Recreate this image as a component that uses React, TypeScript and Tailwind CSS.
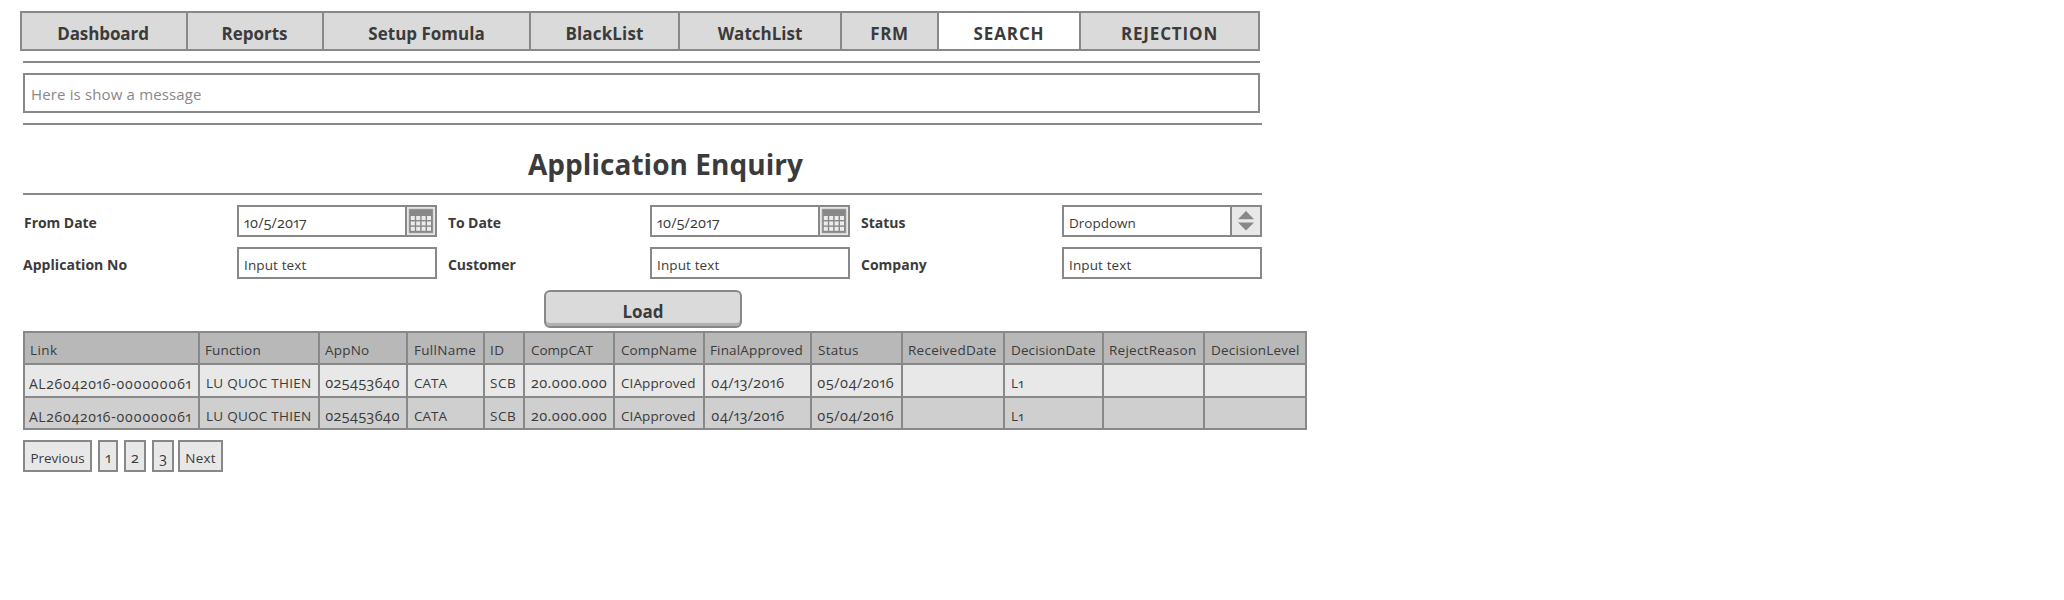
type Item = { label: string; className: string };

const tabs: Item[] = [
  { label: "Dashboard", className: "w-[166px] pr-[2px] tracking-[-0.1px]" },
  { label: "Reports", className: "w-[136px] pr-[1px]" },
  { label: "Setup Fomula", className: "w-[207px]" },
  { label: "BlackList", className: "w-[149px] tracking-[0.15px]" },
  { label: "WatchList", className: "w-[162px]" },
  { label: "FRM", className: "w-[97px] tracking-[0.6px]" },
  { label: "SEARCH", className: "w-[142px] bg-white tracking-[0.9px]" },
  { label: "REJECTION", className: "w-[179px] tracking-[0.85px]" },
];

type Column = {
  label: string;
  value: string;
  width: string;
  head: string;
  cell: string;
};

const columns: Column[] = [
  { label: "Link", value: "AL26042016-000000061", width: "w-[175px]", head: "pl-[5px] tracking-[0.4px]", cell: "pl-[4px] text-[14px] tracking-[0.5px]" },
  { label: "Function", value: "LU QUOC THIEN", width: "w-[120px]", head: "pl-[5px] tracking-[0.15px]", cell: "pl-[6px] tracking-[0.25px]" },
  { label: "AppNo", value: "025453640", width: "w-[88px]", head: "pl-[5px] tracking-[0.2px]", cell: "pl-[5px] text-[14.5px] tracking-[0.15px]" },
  { label: "FullName", value: "CATA", width: "w-[77px]", head: "pl-[6px] tracking-[0.3px]", cell: "pl-[6px]" },
  { label: "ID", value: "SCB", width: "w-[40px]", head: "pl-[5px] tracking-[0.5px]", cell: "pl-[5px] tracking-[0.5px]" },
  { label: "CompCAT", value: "20.000.000", width: "w-[90px]", head: "pl-[6px]", cell: "pl-[6px] text-[14.5px] tracking-[0.15px]" },
  { label: "CompName", value: "CIApproved", width: "w-[90px]", head: "pl-[6px] tracking-[0.1px]", cell: "pl-[6px] tracking-[0.1px]" },
  { label: "FinalApproved", value: "04/13/2016", width: "w-[107px]", head: "pl-[5px] tracking-[0.15px]", cell: "pl-[6px] text-[14.5px] tracking-[0.25px]" },
  { label: "Status", value: "05/04/2016", width: "w-[91px]", head: "pl-[6px] tracking-[0.25px]", cell: "pl-[5px] text-[14.5px] tracking-[0.3px]" },
  { label: "ReceivedDate", value: "", width: "w-[102px]", head: "pl-[5px] tracking-[0.25px]", cell: "" },
  { label: "DecisionDate", value: "L1", width: "w-[99px]", head: "pl-[6px] tracking-[0.12px]", cell: "pl-[6px] tracking-[0.3px]" },
  { label: "RejectReason", value: "", width: "w-[101px]", head: "pl-[5px] tracking-[0.25px]", cell: "" },
  { label: "DecisionLevel", value: "", width: "w-[102px]", head: "pl-[6px] tracking-[0.22px]", cell: "" },
];

const pages: Item[] = [
  { label: "Previous", className: "w-[69px]" },
  { label: "1", className: "ml-[6px] w-[20px] text-[14.5px]" },
  { label: "2", className: "ml-[6px] w-[22px] text-[14.5px]" },
  { label: "3", className: "ml-[6px] w-[22px] text-[14.5px]" },
  { label: "Next", className: "ml-[4px] w-[45px] tracking-[0.2px]" },
];

function CalendarIcon() {
  return (
    <svg width="28" height="28" viewBox="0 0 28 28">
      <rect x="1.75" y="1.75" width="24.5" height="24.5" fill="#a0a0a0" />
      <rect x="2.5" y="2.5" width="23" height="23" fill="#888888" />
      {[9, 14.4, 19.8].map((y) =>
        [3.8, 9.2, 14.6, 20].map((x) => (
          <rect key={`${x}-${y}`} x={x} y={y} width="4" height="4" fill="#ececec" />
        )),
      )}
    </svg>
  );
}

function SpinnerIcon() {
  return (
    <svg width="28" height="28" viewBox="0 0 28 28">
      <path d="M14 4 22 12.3H6Z" fill="#888888" />
      <path d="M6 15.4H22L14 23.6Z" fill="#888888" />
    </svg>
  );
}

function Rule({ className }: { className: string }) {
  return <div className={`ml-[3px] h-[2px] bg-[#888888] ${className}`} />;
}

function Field({ value, kind, text }: { value: string; kind?: "date" | "select"; text: string }) {
  return (
    <div className="flex h-8 w-[200px] border-2 border-[#888888] bg-white">
      <span className={`flex flex-1 items-center pt-1 ${text}`}>{value}</span>
      {kind && (
        <span className="w-[30px] border-l-2 border-[#888888] bg-[#e8e8e8]">
          {kind === "date" ? <CalendarIcon /> : <SpinnerIcon />}
        </span>
      )}
    </div>
  );
}

function Label({ text, className }: { text: string; className: string }) {
  return (
    <span className={`flex h-8 items-center pt-[3px] text-[14px] font-bold ${className}`}>{text}</span>
  );
}

function TableRow({ values, header, className }: { values: string[]; header?: boolean; className: string }) {
  return (
    <div className={`flex w-max border-b-2 border-l-2 border-[#888888] ${className}`}>
      {columns.map((column, i) => (
        <span
          key={column.label}
          className={`flex items-center border-r-2 border-[#888888] ${column.width} ${header ? column.head : column.cell}`}
        >
          {values[i]}
        </span>
      ))}
    </div>
  );
}

export default function App() {
  const record = columns.map((column) => column.value);

  return (
    <div className="min-h-[600px] bg-white pt-[11px] pl-5 font-['Open_Sans','Noto_Sans',sans-serif] whitespace-nowrap text-[#3b3b3b] [font-feature-settings:'onum','pnum']">
      <nav className="flex h-10 w-[1240px] border-2 border-r-0 border-[#888888] bg-[#dadada]">
        {tabs.map((tab) => (
          <a
            key={tab.label}
            className={`flex items-center justify-center border-r-2 border-[#888888] pt-[6px] text-[17px] font-bold ${tab.className}`}
          >
            {tab.label}
          </a>
        ))}
      </nav>

      <Rule className="mt-[10px] w-[1237px]" />
      <div className="mt-[10px] ml-[3px] flex h-10 w-[1237px] items-center border-2 border-[#888888] pt-[2px] pl-[6px] text-[15px] tracking-[0.15px] text-[#888888]">
        Here is show a message
      </div>
      <Rule className="mt-[10px] w-[1239px]" />

      <h1 className="ml-[3px] flex h-[68px] w-[1285px] items-center justify-center pt-[9px] text-[28px] font-bold tracking-[0.05px]">
        Application Enquiry
      </h1>
      <Rule className="w-[1239px]" />

      <form className="mt-[10px] ml-[3px] grid w-[1239px] grid-cols-[214px_200px_213px_200px_212px_200px] gap-y-[10px]">
        <Label text="From Date" className="pl-[1px] tracking-[-0.05px]" />
        <Field value="10/5/2017" kind="date" text="pl-[5px] text-[14.5px]" />
        <Label text="To Date" className="pl-[11px] tracking-[-0.1px]" />
        <Field value="10/5/2017" kind="date" text="pl-[5px] text-[14.5px]" />
        <Label text="Status" className="pl-[11px]" />
        <Field value="Dropdown" kind="select" text="pl-[5px] text-[13.5px]" />
        <Label text="Application No" className="tracking-[0.05px]" />
        <Field value="Input text" text="pl-[5px] text-[13.5px] tracking-[0.12px]" />
        <Label text="Customer" className="pl-[11px] tracking-[-0.05px]" />
        <Field value="Input text" text="pl-[5px] text-[13.5px] tracking-[0.12px]" />
        <Label text="Company" className="pl-[11px]" />
        <Field value="Input text" text="pl-[5px] text-[13.5px] tracking-[0.12px]" />
      </form>

      <button className="mt-[11px] ml-[524px] flex h-[38px] w-[198px] items-center justify-center rounded-[6px] border-2 border-[#888888] bg-[#dadada] pt-[6px] text-[17px] font-bold shadow-[inset_0_-3px_0_#b0b0b0]">
        Load
      </button>

      <div className="mt-[3px] ml-[3px] w-max border-t-2 border-[#888888] text-[13.5px]">
        <TableRow header values={columns.map((c) => c.label)} className="h-8 bg-[#b8b8b8] *:pt-1" />
        <TableRow values={record} className="h-[33px] bg-[#e8e8e8] *:pt-[5px]" />
        <TableRow values={record} className="h-8 bg-[#cfcfcf] *:pt-[6px]" />
      </div>

      <div className="mt-[10px] ml-[3px] flex text-[13.5px]">
        {pages.map((page) => (
          <span
            key={page.label}
            className={`flex h-8 items-center justify-center border-2 border-[#888888] bg-[#e8e8e8] pt-1 ${page.className}`}
          >
            {page.label}
          </span>
        ))}
      </div>
    </div>
  );
}
